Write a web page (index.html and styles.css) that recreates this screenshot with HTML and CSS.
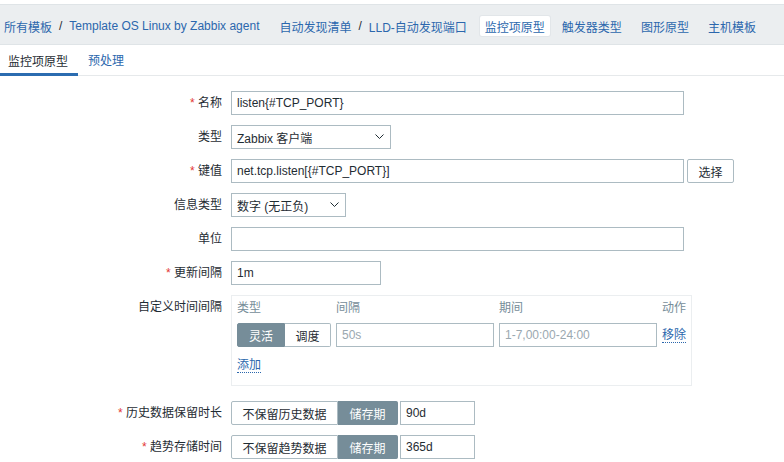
FILE: index.html
```html
<!DOCTYPE html>
<html lang="zh">
<head>
<meta charset="utf-8">
<link rel="stylesheet" href="styles.css">
</head>
<body>
<div class="topgap"></div>
<nav class="nav">
  <div class="crumbs">
    <a class="link">所有模板</a><span class="sep">/</span><a class="link">Template OS Linux by Zabbix agent</a>
  </div>
  <div class="crumbs second">
    <a class="link">自动发现清单</a><span class="sep">/</span><a class="link">LLD-自动发现端口</a>
  </div>
  <div class="navtabs">
    <a class="navtab selected">监控项原型</a>
    <a class="navtab">触发器类型</a>
    <a class="navtab">图形原型</a>
    <a class="navtab">主机模板</a>
  </div>
</nav>
<div class="tabs">
  <a class="tab active">监控项原型</a>
  <a class="tab">预处理</a>
</div>
<form class="form">
  <div class="row">
    <div class="label"><span class="req">*</span> 名称</div>
    <div class="field input w-wide">listen{#TCP_PORT}</div>
  </div>
  <div class="row">
    <div class="label">类型</div>
    <div class="field input select w-type">Zabbix 客户端<svg class="chev" width="9" height="6" viewBox="0 0 9 6"><polyline points="0.5,0.5 4.5,4.5 8.5,0.5" fill="none" stroke="#1f2c33" stroke-width="1"/></svg></div>
  </div>
  <div class="row">
    <div class="label"><span class="req">*</span> 键值</div>
    <div class="field input w-wide">net.tcp.listen[{#TCP_PORT}]</div>
    <div class="btn">选择</div>
  </div>
  <div class="row">
    <div class="label">信息类型</div>
    <div class="field input select w-info">数字 (无正负)<svg class="chev" width="9" height="6" viewBox="0 0 9 6"><polyline points="0.5,0.5 4.5,4.5 8.5,0.5" fill="none" stroke="#1f2c33" stroke-width="1"/></svg></div>
  </div>
  <div class="row">
    <div class="label">单位</div>
    <div class="field input w-wide"></div>
  </div>
  <div class="row">
    <div class="label"><span class="req">*</span> 更新间隔</div>
    <div class="field input w-upd">1m</div>
  </div>
  <div class="row">
    <div class="label">自定义时间间隔</div>
    <div class="field intervals">
      <div class="igrid">
        <div class="ihead">类型</div>
        <div class="ihead">间隔</div>
        <div class="ihead">期间</div>
        <div class="ihead">动作</div>
        <div class="toggle">
          <span class="opt on w-flex">灵活</span><span class="opt w-sched">调度</span>
        </div>
        <div class="input ph">50s</div>
        <div class="input ph">1-7,00:00-24:00</div>
        <div class="action"><a class="dlink">移除</a></div>
      </div>
      <a class="dlink add">添加</a>
    </div>
  </div>
  <div class="row big-gap">
    <div class="label"><span class="req">*</span> 历史数据保留时长</div>
    <div class="toggle">
      <span class="opt w-keep">不保留历史数据</span><span class="opt on w-store">储存期</span>
    </div>
    <div class="input w-days">90d</div>
  </div>
  <div class="row">
    <div class="label"><span class="req">*</span> 趋势存储时间</div>
    <div class="toggle">
      <span class="opt w-keep">不保留趋势数据</span><span class="opt on w-store">储存期</span>
    </div>
    <div class="input w-days">365d</div>
  </div>
</form>
</body>
</html>
```
FILE: styles.css
```css
* { box-sizing: border-box; }
html, body {
  margin: 0;
  padding: 0;
  background: #ffffff;
  font-family: "Liberation Sans", Arial, "Noto Sans CJK SC", sans-serif;
  font-size: 12px;
  color: #1f2c33;
  overflow: hidden;
}
a { text-decoration: none; cursor: pointer; }
.topgap { height: 4px; background: #ffffff; }
.nav {
  display: flex;
  align-items: center;
  height: 41px;
  padding: 3px 0 0 4px;
  background: #ebeef0;
  border-top: 1px solid #dfe4e7;
  border-bottom: 1px solid #dfe4e7;
}
.crumbs { display: flex; align-items: center; gap: 7px; }
.crumbs.second { margin-left: 20px; }
.link { color: #2b67ad; }
.sep { color: #1f2c33; }
.navtabs { display: flex; align-items: center; gap: 9px; margin-left: 13px; }
.navtab {
  display: flex;
  align-items: center;
  height: 20px;
  padding: 0 5px;
  color: #2b67ad;
  border-radius: 2px;
}
.navtab.selected {
  background: #ffffff;
  box-shadow: 0 0 0 1px #e2e6e9;
  margin-right: -2px;
}
.tabs {
  display: flex;
  height: 31px;
  border-bottom: 1px solid #e6e9eb;
}
.tab {
  display: flex;
  align-items: center;
  padding: 0 10px;
  color: #2b67ad;
  border-bottom: 3px solid transparent;
  padding-top: 2px;
}
.tab.active {
  color: #1f2c33;
  border-bottom-color: #2b6cb0;
  padding-left: 8px;
  margin-bottom: -1px;
}
.form {
  display: flex;
  flex-direction: column;
  gap: 10px;
  padding-top: 15px;
}
.row { display: flex; align-items: flex-start; }
.row.big-gap { margin-top: 5px; }
.label {
  width: 222px;
  margin-right: 9px;
  text-align: right;
  line-height: 24px;
  color: #1f2c33;
}
.req { color: #e33734; }
.input {
  display: flex;
  align-items: center;
  height: 24px;
  padding: 0 5px;
  border: 1px solid #acbbc2;
  background: #ffffff;
  color: #1f2c33;
  white-space: nowrap;
}
.select { justify-content: space-between; padding-right: 6px; }
.chev { display: block; }
.w-wide { width: 453px; }
.w-type { width: 160px; }
.w-info { width: 115px; }
.w-upd { width: 150px; }
.btn {
  display: flex;
  align-items: center;
  justify-content: center;
  margin-left: 3px;
  width: 47px;
  height: 24px;
  border: 1px solid #acbbc2;
  border-radius: 2px;
  background: #ffffff;
  color: #1f2c33;
}
.intervals {
  width: 461px;
  height: 91px;
  border: 1px solid #ebeef0;
  padding: 3px 5px 0 5px;
}
.igrid {
  display: grid;
  grid-template-columns: 94px 158px 158px auto;
  column-gap: 5px;
  row-gap: 6px;
  align-items: center;
}
.ihead { color: #768d99; line-height: 18px; }
.toggle {
  display: flex;
  height: 24px;
}
.opt {
  display: flex;
  align-items: center;
  justify-content: center;
  height: 24px;
  border: 1px solid #acbbc2;
  background: #ffffff;
  color: #1f2c33;
}
.opt + .opt { border-left: none; }
.opt:first-child { border-radius: 2px 0 0 2px; }
.opt:last-child { border-radius: 0 2px 2px 0; }
.opt.on { background: #768d99; border-color: #768d99; color: #ffffff; }
.w-flex { width: 48px; }
.w-sched { width: 46px; }
.w-keep { width: 107px; }
.w-store { width: 60px; }
.ph { color: #9aa8b0; }
.dlink {
  color: #2b67ad;
  border-bottom: 1px dotted #2b67ad;
  line-height: 14px;
}
.action { display: flex; }
.add { display: inline-block; margin-top: 11px; }
.w-days { width: 75px; margin-left: 2px; }
```
